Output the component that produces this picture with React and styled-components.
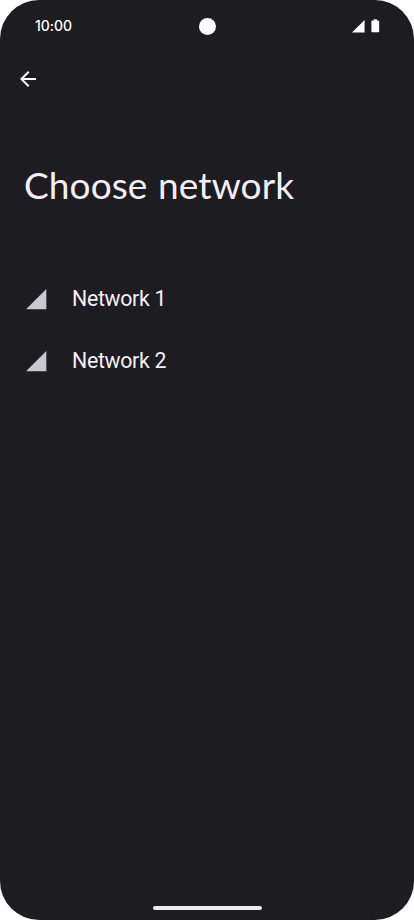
import React from 'react';
import styled, { createGlobalStyle } from 'styled-components';

const GlobalStyle = createGlobalStyle`
    * {
        box-sizing: border-box;
    }
    body {
        margin: 0;
        background: #ffffff;
    }
`;

const Phone = styled.div`
    display: flex;
    flex-direction: column;
    width: 414px;
    height: 920px;
    overflow: hidden;
    border-radius: 39px;
    background: #1d1c21;
    color: #f3eff5;
    font-family: Roboto, sans-serif;
`;

const StatusBar = styled.header`
    display: grid;
    grid-template-columns: 1fr auto 1fr;
    align-items: center;
    height: 53px;
    padding: 0 34px 0 35px;
`;

const Clock = styled.span`
    padding-bottom: 1px;
    color: #ffffff;
    font-family: Inter, sans-serif;
    font-size: 14px;
    font-weight: 500;
    line-height: 20px;
    letter-spacing: -0.05px;
`;

const Camera = styled.div`
    width: 17px;
    height: 17px;
    margin-right: 1px;
    border-radius: 50%;
    background: #ffffff;
`;

const StatusIcons = styled.div`
    display: flex;
    justify-content: flex-end;
    align-items: center;
    gap: 6px;
    padding-bottom: 1px;
`;

const Toolbar = styled.nav`
    display: flex;
    align-items: center;
    height: 51px;
    padding-left: 16px;
`;

const BackButton = styled.button`
    display: flex;
    padding: 0;
    border: 0;
    background: none;
    color: #ffffff;
`;

const Title = styled.h1`
    margin: 57px 0 0 24px;
    font-family: Lato, sans-serif;
    font-size: 37px;
    font-weight: 400;
    line-height: 48px;
    letter-spacing: 0.1px;
    word-spacing: 1px;
    white-space: nowrap;
`;

const NetworkList = styled.ul`
    flex: 1;
    margin: 59px 0 0;
    padding: 0;
    list-style: none;
`;

const NetworkItem = styled.li`
    display: flex;
    align-items: center;
    gap: 25px;
    height: 62px;
    padding-left: 26px;
`;

const NetworkName = styled.span`
    font-size: 21.3px;
    line-height: 28px;
    letter-spacing: -0.3px;
`;

const HomeIndicator = styled.div`
    align-self: center;
    width: 109px;
    height: 4px;
    margin-bottom: 10px;
    border-radius: 2px;
    background: #ececec;
`;

const Signal = ({ size, color }) => (
    <svg width={size} height={size} viewBox="0 0 21 21" fill={color}>
        <path d="M0 20.3 20.3 0V20.3Z" />
    </svg>
);

const Battery = () => (
    <svg width="9" height="14" viewBox="0 0 9 14" fill="#ffffff">
        <path d="M2.8 .2h3v1.2h1.5Q8.2 1.4 8.2 2.2V12.5Q8.2 13.3 7.4 13.3H1.2Q.4 13.3 .4 12.5V2.2Q.4 1.4 1.2 1.4H2.8Z" />
    </svg>
);

const BackArrow = () => (
    <svg width="24" height="24" viewBox="0 0 24 24" fill="currentColor">
        <path d="M20 11H7.83l5.59-5.59L12 4l-8 8 8 8 1.41-1.41L7.83 13H20v-2z" />
    </svg>
);

const networks = ['Network 1', 'Network 2'];

export default function App() {
    return (
        <Phone>
            <GlobalStyle />
            <StatusBar>
                <Clock>10:00</Clock>
                <Camera />
                <StatusIcons>
                    <Signal size={13} color="#ffffff" />
                    <Battery />
                </StatusIcons>
            </StatusBar>
            <Toolbar>
                <BackButton aria-label="Back">
                    <BackArrow />
                </BackButton>
            </Toolbar>
            <Title>Choose network</Title>
            <NetworkList>
                {networks.map(name => (
                    <NetworkItem key={name}>
                        <Signal size={21} color="#cac7d0" />
                        <NetworkName>{name}</NetworkName>
                    </NetworkItem>
                ))}
            </NetworkList>
            <HomeIndicator />
        </Phone>
    );
}
